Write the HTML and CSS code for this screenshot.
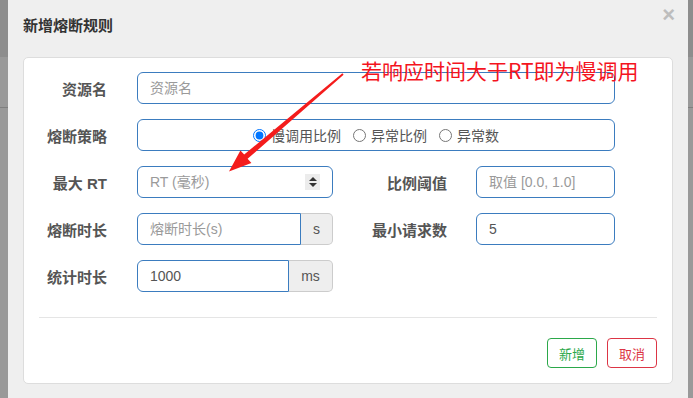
FILE: index.html
```html
<!DOCTYPE html>
<html lang="zh-CN">
<head>
  <meta charset="UTF-8" />
  <title>新增熔断规则</title>
  <link rel="stylesheet" href="styles.css">
</head>
<body>
  <!-- Modal -->
  <div class="modal">
    <div class="modal-header">
      <h4 class="modal-title">新增熔断规则</h4>
      <span class="close">&times;</span>
    </div>

    <div class="panel">
      <div class="form-grid">
        <label class="lbl">资源名</label>
        <input type="text" class="field wide" placeholder="资源名">

        <label class="lbl">熔断策略</label>
        <div class="field wide radio-box">
          <label class="radio"><input type="radio" name="grade" checked>慢调用比例</label>
          <label class="radio"><input type="radio" name="grade">异常比例</label>
          <label class="radio"><input type="radio" name="grade">异常数</label>
        </div>

        <label class="lbl">最大 RT</label>
        <div class="field num-box">
          <input type="text" class="bare" placeholder="RT (毫秒)">
          <span class="spinner"><i class="up"></i><i class="down"></i></span>
        </div>
        <label class="lbl lbl-2">比例阈值</label>
        <input type="text" class="field" placeholder="取值 [0.0, 1.0]">

        <label class="lbl">熔断时长</label>
        <div class="input-group">
          <input type="text" class="field grouped" placeholder="熔断时长(s)">
          <span class="addon addon-s">s</span>
        </div>
        <label class="lbl lbl-2">最小请求数</label>
        <input type="text" class="field" value="5">

        <label class="lbl">统计时长</label>
        <div class="input-group">
          <input type="text" class="field grouped" value="1000">
          <span class="addon addon-ms">ms</span>
        </div>
      </div>

      <hr class="divider">

      <div class="actions">
        <button class="btn btn-add">新增</button>
        <button class="btn btn-cancel">取消</button>
      </div>
    </div>
  </div>

  <!-- Annotation drawn over the screenshot -->
  <div class="note">若响应时间大于RT即为慢调用</div>
  <svg class="arrow" width="693" height="398" viewBox="0 0 693 398">
    <polygon fill="#f41c1c" points="343.6,74.8 342.4,73.2 244.2,154.6 240.4,150.4 229,171.5 251.4,163 247.6,158.8"/>
  </svg>
</body>
</html>
```

FILE: styles.css
```css
* {
  box-sizing: border-box;
}

body {
  margin: 0;
  width: 693px;
  height: 398px;
  overflow: hidden;
  position: relative;
  font-family: "Liberation Sans", "Noto Sans CJK SC", sans-serif;
  background: linear-gradient(to bottom, #8d8d8d 0 57px, #999 57px 107px, #7f7f7f 107px 108px, #999 108px);
}

.modal {
  margin-left: 8px;
  width: 680px;
  height: 398px;
  background-color: #efefef;
  padding: 0 15px;
}

.modal-header {
  display: flex;
  justify-content: space-between;
  align-items: flex-start;
  height: 57px;
}

.modal-title {
  margin: 17px 0 0;
  font-size: 15px;
  font-weight: bold;
  color: #333;
  line-height: 18px;
}

.close {
  margin: 4px -2px 0 0;
  font-size: 22px;
  font-weight: bold;
  line-height: 22px;
  color: #bdbdbd;
}

.panel {
  background: white;
  border: 1px solid #ddd;
  border-radius: 5px;
  padding: 14px 0 15px;
}

.form-grid {
  display: grid;
  grid-template-columns: 113px 196px 143px 139px;
  grid-auto-rows: 32px;
  row-gap: 15px;
  align-items: center;
}

.lbl {
  text-align: right;
  padding-right: 30px;
  font-size: 15px;
  font-weight: bold;
  color: #555;
}

.lbl-2 {
  padding-right: 29px;
}

.field {
  height: 32px;
  width: 100%;
  border: 1px solid #3b7cbf;
  border-radius: 6px;
  padding: 0 12px;
  font-size: 14px;
  font-family: "Liberation Sans", "Noto Sans CJK SC", sans-serif;
  color: #555;
  background: white;
  outline: none;
}

.field::placeholder,
.bare::placeholder {
  color: #9a9a9a;
}

.wide {
  grid-column: span 3;
}

.radio-box {
  display: flex;
  align-items: center;
  justify-content: center;
  gap: 12px;
  padding-left: 12px;
}

.radio {
  display: flex;
  align-items: center;
  gap: 5px;
  font-size: 14px;
  color: #555;
}

.radio input {
  margin: 0;
  width: 13px;
  height: 13px;
}

.num-box {
  display: flex;
  align-items: center;
  padding-right: 12px;
}

.bare {
  flex: 1;
  min-width: 0;
  border: none;
  outline: none;
  padding: 0;
  font-size: 14px;
  font-family: "Liberation Sans", "Noto Sans CJK SC", sans-serif;
}

.spinner {
  width: 15px;
  height: 16px;
  background: #ececec;
  display: flex;
  flex-direction: column;
  align-items: center;
  justify-content: center;
  gap: 2px;
}

.spinner i {
  width: 0;
  height: 0;
  border-left: 4px solid transparent;
  border-right: 4px solid transparent;
}

.spinner .up {
  border-bottom: 4px solid #333;
}

.spinner .down {
  border-top: 4px solid #333;
}

.input-group {
  display: flex;
  height: 32px;
}

.grouped {
  flex: 1;
  min-width: 0;
  border-radius: 6px 0 0 6px;
}

.addon {
  display: flex;
  align-items: center;
  justify-content: center;
  background: #eee;
  border: 1px solid #ccc;
  border-left: none;
  border-radius: 0 5px 5px 0;
  font-size: 14px;
  color: #555;
}

.addon-s {
  width: 32px;
}

.addon-ms {
  width: 44px;
}

.divider {
  border: none;
  border-top: 1px solid #e5e5e5;
  margin: 25px 15px 20px;
}

.actions {
  display: flex;
  justify-content: flex-end;
  gap: 10px;
  padding-right: 15px;
}

.btn {
  width: 50px;
  height: 30px;
  background: white;
  border-radius: 4px;
  font-size: 13px;
  font-family: "Liberation Sans", "Noto Sans CJK SC", sans-serif;
  padding: 0;
}

.btn-add {
  border: 1px solid #2ba84a;
  color: #2ba84a;
}

.btn-cancel {
  border: 1px solid #dc3545;
  color: #dc3545;
}

.note {
  position: absolute;
  left: 361px;
  top: 56px;
  font-family: "Noto Sans CJK SC", sans-serif;
  font-size: 21px;
  line-height: 28px;
  color: #f4141e;
  white-space: nowrap;
}

.arrow {
  position: absolute;
  left: 0;
  top: 0;
  pointer-events: none;
}
```
